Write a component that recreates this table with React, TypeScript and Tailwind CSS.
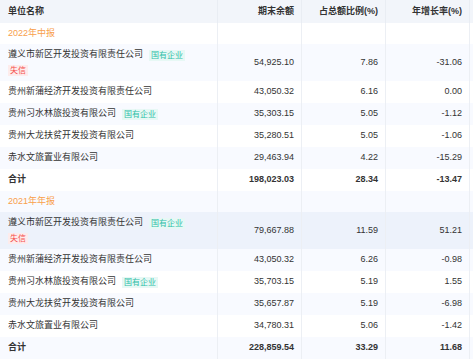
import React, { useState } from 'react'

type Row = {
  name: string
  tag?: boolean
  dishonest?: boolean
  amount: string
  ratio: string
  growth: string
}

const groups: { title: string; rows: Row[]; total: [string, string, string] }[] = [
  {
    title: '2022年中报',
    rows: [
      { name: '遵义市新区开发投资有限责任公司', tag: true, dishonest: true, amount: '54,925.10', ratio: '7.86', growth: '-31.06' },
      { name: '贵州新蒲经济开发投资有限责任公司', amount: '43,050.32', ratio: '6.16', growth: '0.00' },
      { name: '贵州习水林旅投资有限公司', tag: true, amount: '35,303.15', ratio: '5.05', growth: '-1.12' },
      { name: '贵州大龙扶贫开发投资有限公司', amount: '35,280.51', ratio: '5.05', growth: '-1.06' },
      { name: '赤水文旅置业有限公司', amount: '29,463.94', ratio: '4.22', growth: '-15.29' },
    ],
    total: ['198,023.03', '28.34', '-13.47'],
  },
  {
    title: '2021年年报',
    rows: [
      { name: '遵义市新区开发投资有限责任公司', tag: true, dishonest: true, amount: '79,667.88', ratio: '11.59', growth: '51.21' },
      { name: '贵州新蒲经济开发投资有限责任公司', amount: '43,050.32', ratio: '6.26', growth: '-0.98' },
      { name: '贵州习水林旅投资有限公司', tag: true, amount: '35,703.15', ratio: '5.19', growth: '1.55' },
      { name: '贵州大龙扶贫开发投资有限公司', amount: '35,657.87', ratio: '5.19', growth: '-6.98' },
      { name: '赤水文旅置业有限公司', amount: '34,780.31', ratio: '5.06', growth: '-1.42' },
    ],
    total: ['228,859.54', '33.29', '11.68'],
  },
]

const cell = 'w-[84px] shrink-0 flex items-center justify-end pr-[7px] border-r border-[#eceff4]'

export default function App() {
  const [hover, setHover] = useState<number | null>(8)

  // flatten so the stripes alternate across the whole body
  const lines: { key: number; kind: 'group' | 'row' | 'total'; title?: string; row?: Row; total?: [string, string, string] }[] = []
  let k = 0
  groups.forEach((g) => {
    lines.push({ key: k++, kind: 'group', title: g.title })
    g.rows.forEach((r) => lines.push({ key: k++, kind: 'row', row: r }))
    lines.push({ key: k++, kind: 'total', total: g.total })
  })

  return (
    <div className="w-[473px] h-[360px] overflow-hidden bg-white text-[9px] text-[#333] font-['Liberation_Sans','Noto_Sans_CJK_SC',sans-serif]">
      {/* 表头 */}
      <div className="flex h-[23px] bg-[#f2f5fa] font-bold">
        <div className="w-[218px] shrink-0 flex items-center pl-2 border-r border-[#e9edf3]">单位名称</div>
        <div className={cell.replace('border-[#eceff4]', 'border-[#e9edf3]')}>期末余额</div>
        <div className={cell.replace('border-[#eceff4]', 'border-[#e9edf3]')}>占总额比例(%)</div>
        <div className={cell.replace('border-[#eceff4]', 'border-[#e9edf3]')}>年增长率(%)</div>
        <div className="flex-1" />
      </div>

      {lines.map((l, i) => {
        const bg = hover === l.key ? 'bg-[#edf2fb]' : i % 2 === 1 ? 'bg-[#f8faff]' : 'bg-white'
        if (l.kind === 'group') {
          return (
            <div key={l.key} className={`flex h-[21px] ${bg}`} onMouseEnter={() => setHover(l.key)}>
              <div className="w-[218px] shrink-0 flex items-center pl-2 text-[#f8a04c] border-r border-[#eceff4]">{l.title}</div>
              <div className={cell} />
              <div className={cell} />
              <div className={cell} />
              <div className="flex-1" />
            </div>
          )
        }
        if (l.kind === 'total') {
          return (
            <div key={l.key} className={`flex h-[22px] font-bold ${bg}`} onMouseEnter={() => setHover(l.key)}>
              <div className="w-[218px] shrink-0 flex items-center pl-2 border-r border-[#eceff4]">合计</div>
              <div className={cell}>{l.total![0]}</div>
              <div className={cell}>{l.total![1]}</div>
              <div className={cell}>{l.total![2]}</div>
              <div className="flex-1" />
            </div>
          )
        }
        const r = l.row!
        return (
          <div key={l.key} className={`flex ${r.dishonest ? 'h-[37px]' : 'h-[22px]'} ${bg}`} onMouseEnter={() => setHover(l.key)}>
            <div className="w-[218px] shrink-0 flex flex-col justify-center pl-2 border-r border-[#eceff4]">
              <div className="flex items-center h-[14px]">
                <span>{r.name}</span>
                {r.tag && (
                  <span className="ml-[6px] px-[2px] leading-[11px] text-[8px] text-[#2fbfa8] bg-[#e7f8f5]">国有企业</span>
                )}
              </div>
              {r.dishonest && (
                <div className="flex items-center h-[14px] mt-[1px]">
                  <span className="px-[2px] leading-[11px] text-[8px] text-[#f5504f] bg-[#fdecec]">失信</span>
                </div>
              )}
            </div>
            <div className={cell}>{r.amount}</div>
            <div className={cell}>{r.ratio}</div>
            <div className={cell}>{r.growth}</div>
            <div className="flex-1" />
          </div>
        )
      })}
    </div>
  )
}
